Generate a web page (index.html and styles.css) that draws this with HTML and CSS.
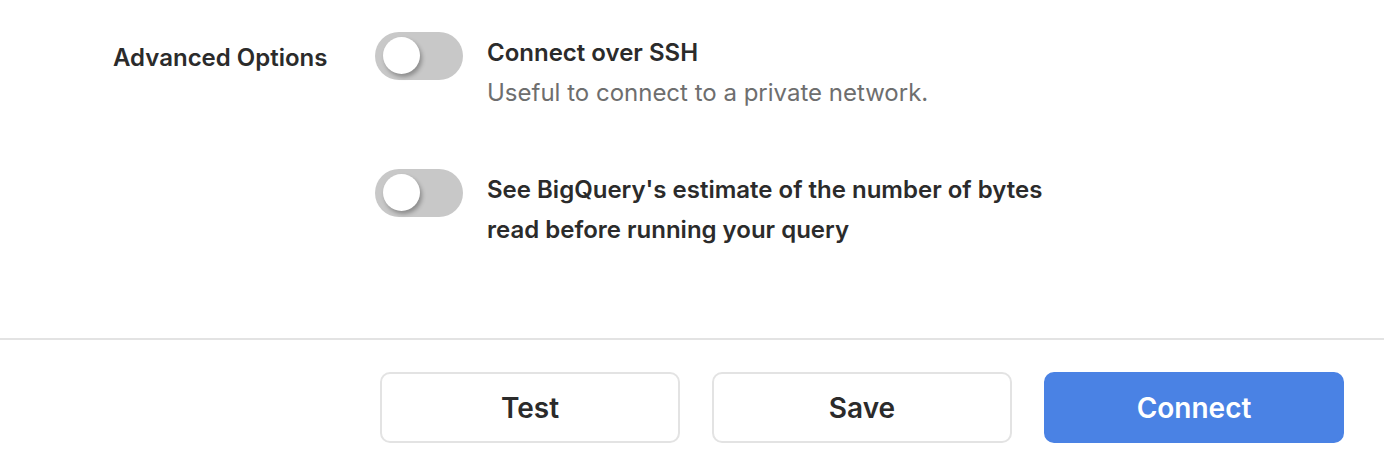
FILE: index.html
```html
<!DOCTYPE html>
<html lang="en">
<head>
    <meta charset="UTF-8">
    <meta name="viewport" content="width=device-width, initial-scale=1.0">
    <title>Connection settings</title>
    <link rel="stylesheet" href="styles.css">
</head>
<body>
    <div class="form-row">
        <div class="row-label">Advanced Options</div>
        <div class="options">
            <div class="option">
                <span class="toggle"><span class="knob"></span></span>
                <div class="option-text">
                    <div class="option-title">Connect over SSH</div>
                    <div class="option-desc">Useful to connect to a private network.</div>
                </div>
            </div>
            <div class="option">
                <span class="toggle"><span class="knob"></span></span>
                <div class="option-text">
                    <div class="option-title">See BigQuery's estimate of the number of bytes<br>read before running your query</div>
                </div>
            </div>
        </div>
    </div>
    <footer class="actions">
        <button class="btn">Test</button>
        <button class="btn">Save</button>
        <button class="btn btn-primary">Connect</button>
    </footer>
</body>
</html>
```
FILE: styles.css
```css
body {
    font-family: 'Inter', 'Noto Sans', sans-serif;
    background-color: #fff;
    color: #2b2b2b;
    margin: 0;
    padding: 0;
}
.form-row {
    display: flex;
    padding: 32px 0 88px 113px;
}
.row-label {
    width: 262px;
    padding-top: 2px;
    font-size: 24px;
    font-weight: 600;
    line-height: 48px;
}
.options {
    display: flex;
    flex-direction: column;
    gap: 56px;
}
.option {
    display: flex;
    gap: 24px;
}
.toggle {
    flex: none;
    position: relative;
    width: 88px;
    height: 48px;
    border-radius: 24px;
    background-color: #c8c8c8;
}
.knob {
    position: absolute;
    left: 8px;
    top: 5px;
    width: 37px;
    height: 37px;
    border-radius: 50%;
    background-color: #fff;
    box-shadow: 2px 3px 4px rgba(0, 0, 0, 0.3);
}
.option-text {
    padding-top: 1px;
    font-size: 24px;
    line-height: 40px;
}
.option-title {
    font-weight: 600;
}
.option-desc {
    color: #6e6e6e;
}
.actions {
    border-top: 2px solid #e3e3e3;
    display: flex;
    justify-content: flex-end;
    gap: 32px;
    padding: 32px 40px 0 0;
}
.btn {
    width: 300px;
    height: 71px;
    padding-top: 2px;
    border: 2px solid #e3e3e3;
    border-radius: 10px;
    background-color: #fff;
    color: #2b2b2b;
    font-family: inherit;
    font-size: 28px;
    font-weight: 600;
    cursor: pointer;
}
.btn-primary {
    background-color: #4a82e4;
    border-color: #4a82e4;
    color: #fff;
}
```
